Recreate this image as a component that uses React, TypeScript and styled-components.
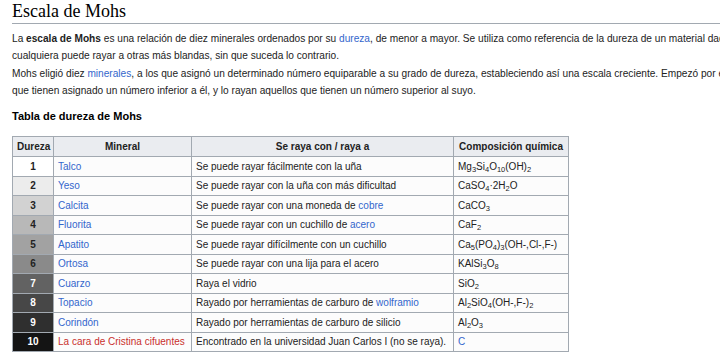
import React from "react";
import styled, { createGlobalStyle } from "styled-components";

const Global = createGlobalStyle`
  html, body { margin: 0; padding: 0; background: #fff; }
  body { overflow: hidden; width: 720px; height: 363px; }
`;

const Page = styled.div`
  width: 720px;
  height: 363px;
  overflow: hidden;
  padding: 0 0 0 12px;
  box-sizing: border-box;
  font-family: "Liberation Sans", Arial, sans-serif;
  color: #222;
`;

const Heading = styled.h2`
  margin: 0;
  padding: 1px 0 1px;
  font-family: "Liberation Serif", "Times New Roman", serif;
  font-weight: normal;
  font-size: 18px;
  line-height: 21px;
  color: #000;
  border-bottom: 1px solid #a2a9b1;
`;

const Para = styled.p`
  margin: 6px 0 1px;
  font-size: 10.15px;
  line-height: 17px;
  white-space: nowrap;
  & + & { margin-top: 1px; }
`;

const Line = styled.span`
  display: block;
`;

const Link = styled.a<{ $red?: boolean }>`
  color: ${(p) => (p.$red ? "#c9302c" : "#3366cc")};
  text-decoration: none;
`;

const SubTitle = styled.h3`
  margin: 10px 0 0;
  font-size: 11px;
  line-height: 14px;
  font-weight: bold;
  color: #000;
`;

const Table = styled.table`
  margin-top: 13px;
  border-collapse: collapse;
  table-layout: fixed;
  width: 556px;
  font-size: 10px;
  background: #fcfcfc;
  border: 1px solid #a2a9b1;
`;

const Th = styled.th`
  background: #eaecf0;
  border: 1px solid #a2a9b1;
  font-weight: bold;
  text-align: center;
  height: 19px;
  padding: 0 4px;
  color: #222;
`;

const Td = styled.td`
  border: 1px solid #a2a9b1;
  height: 18.5px;
  padding: 0 4px;
  white-space: nowrap;
  overflow: hidden;
  text-overflow: clip;
`;

const Grade = styled.td<{ $bg: string; $light: boolean }>`
  border: 1px solid #a2a9b1;
  background: ${(p) => p.$bg};
  color: ${(p) => (p.$light ? "#fff" : "#222")};
  font-weight: bold;
  text-align: center;
  height: 18.5px;
  padding: 0;
`;

const Sub = styled.sub`
  font-size: 7.5px;
  vertical-align: -2px;
  line-height: 0;
`;

type Row = {
  n: number;
  bg: string;
  mineral: string;
  red?: boolean;
  desc: React.ReactNode;
  comp: React.ReactNode;
};

const rows: Row[] = [
  { n: 1, bg: "#ffffff", mineral: "Talco", desc: "Se puede rayar fácilmente con la uña", comp: <>Mg<Sub>3</Sub>Si<Sub>4</Sub>O<Sub>10</Sub>(OH)<Sub>2</Sub></> },
  { n: 2, bg: "#ececec", mineral: "Yeso", desc: "Se puede rayar con la uña con más dificultad", comp: <>CaSO<Sub>4</Sub>·2H<Sub>2</Sub>O</> },
  { n: 3, bg: "#d2d2d2", mineral: "Calcita", desc: <>Se puede rayar con una moneda de <Link href="#">cobre</Link></>, comp: <>CaCO<Sub>3</Sub></> },
  { n: 4, bg: "#b8b8b8", mineral: "Fluorita", desc: <>Se puede rayar con un cuchillo de <Link href="#">acero</Link></>, comp: <>CaF<Sub>2</Sub></> },
  { n: 5, bg: "#a2a2a2", mineral: "Apatito", desc: "Se puede rayar difícilmente con un cuchillo", comp: <>Ca<Sub>5</Sub>(PO<Sub>4</Sub>)<Sub>3</Sub>(OH-,Cl-,F-)</> },
  { n: 6, bg: "#8a8a8a", mineral: "Ortosa", desc: "Se puede rayar con una lija para el acero", comp: <>KAlSi<Sub>3</Sub>O<Sub>8</Sub></> },
  { n: 7, bg: "#626262", mineral: "Cuarzo", desc: "Raya el vidrio", comp: <>SiO<Sub>2</Sub></> },
  { n: 8, bg: "#474747", mineral: "Topacio", desc: <>Rayado por herramientas de carburo de <Link href="#">wolframio</Link></>, comp: <>Al<Sub>2</Sub>SiO<Sub>4</Sub>(OH-,F-)<Sub>2</Sub></> },
  { n: 9, bg: "#2f2f2f", mineral: "Corindón", desc: "Rayado por herramientas de carburo de silicio", comp: <>Al<Sub>2</Sub>O<Sub>3</Sub></> },
  { n: 10, bg: "#141414", mineral: "La cara de Cristina cifuentes", red: true, desc: "Encontrado en la universidad Juan Carlos I (no se raya).", comp: <Link href="#">C</Link> },
];

export default function App() {
  return (
    <>
      <Global />
      <Page>
        <Heading>Escala de Mohs</Heading>
        <Para>
          <Line>
            La <b>escala de Mohs</b> es una relación de diez minerales ordenados por su{" "}
            <Link href="#">dureza</Link>, de menor a mayor. Se utiliza como referencia de la dureza de un material dado, de modo que
          </Line>
          <Line>cualquiera puede rayar a otras más blandas, sin que suceda lo contrario.</Line>
        </Para>
        <Para>
          <Line>
            Mohs eligió diez <Link href="#">minerales</Link>, a los que asignó un determinado número equiparable a su grado de dureza, estableciendo así una escala creciente. Empezó por el talco
          </Line>
          <Line>que tienen asignado un número inferior a él, y lo rayan aquellos que tienen un número superior al suyo.</Line>
        </Para>
        <SubTitle>Tabla de dureza de Mohs</SubTitle>
        <Table>
          <colgroup>
            <col style={{ width: 41 }} />
            <col style={{ width: 138 }} />
            <col style={{ width: 262 }} />
            <col style={{ width: 115 }} />
          </colgroup>
          <thead>
            <tr>
              <Th>Dureza</Th>
              <Th>Mineral</Th>
              <Th>Se raya con / raya a</Th>
              <Th>Composición química</Th>
            </tr>
          </thead>
          <tbody>
            {rows.map((r) => (
              <tr key={r.n}>
                <Grade $bg={r.bg} $light={r.n >= 7}>{r.n}</Grade>
                <Td>
                  <Link href="#" $red={r.red}>{r.mineral}</Link>
                </Td>
                <Td>{r.desc}</Td>
                <Td>{r.comp}</Td>
              </tr>
            ))}
          </tbody>
        </Table>
      </Page>
    </>
  );
}
